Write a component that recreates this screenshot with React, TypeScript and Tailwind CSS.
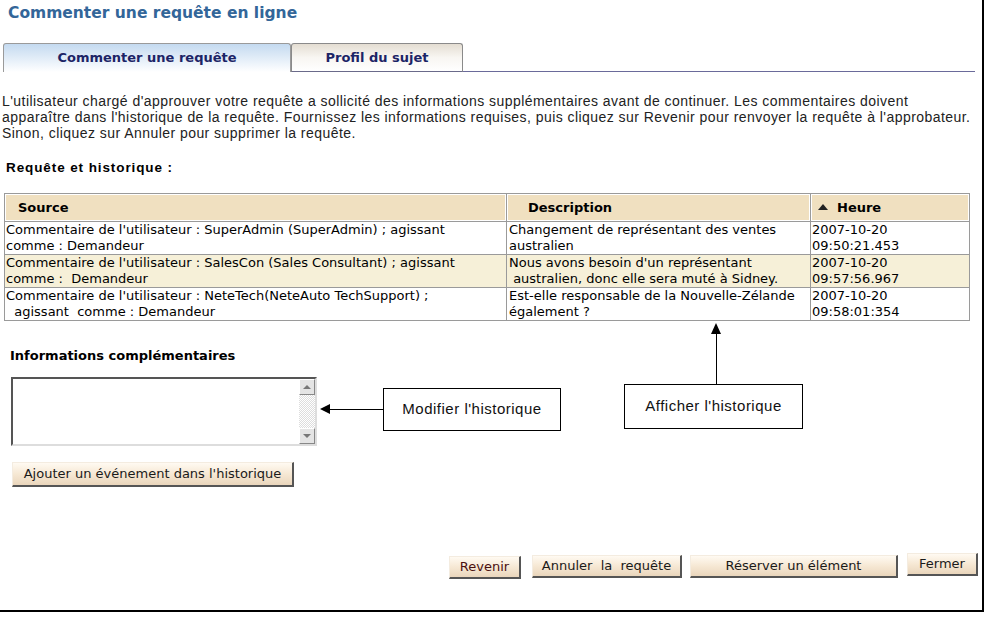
import React from 'react'

const verdana = { fontFamily: '"DejaVu Sans", Verdana, sans-serif' }
const tahoma = { fontFamily: '"Liberation Sans", Tahoma, Arial, sans-serif' }

const rows = [
  {
    source: ["Commentaire de l'utilisateur : SuperAdmin (SuperAdmin) ; agissant", 'comme : Demandeur'],
    desc: ['Changement de représentant des ventes', 'australien'],
    time: ['2007-10-20', '09:50:21.453'],
    alt: false,
  },
  {
    source: ["Commentaire de l'utilisateur : SalesCon (Sales Consultant) ; agissant", 'comme :  Demandeur'],
    desc: ["Nous avons besoin d'un représentant", ' australien, donc elle sera muté à Sidney.'],
    time: ['2007-10-20', '09:57:56.967'],
    alt: true,
  },
  {
    source: ["Commentaire de l'utilisateur : NeteTech(NeteAuto TechSupport) ;", '  agissant  comme : Demandeur'],
    desc: ['Est-elle responsable de la Nouvelle-Zélande', 'également ?'],
    time: ['2007-10-20', '09:58:01:354'],
    alt: false,
  },
]

function OldButton({ label, className, textClass }: { label: string; className?: string; textClass?: string }) {
  return (
    <button
      type="button"
      className={`h-[23px] border border-t-[#f4ece0] border-l-[#f4ece0] border-r-[#555] border-b-[#555] border-r-2 border-b-2 bg-gradient-to-b from-[#fffaf2] via-[#f6e8d4] to-[#ead6bc] text-[13px] leading-none whitespace-pre ${textClass ?? 'text-[#1a1a1a]'} ${className ?? ''}`}
      style={verdana}
    >
      {label}
    </button>
  )
}

export default function App() {
  return (
    <div className="relative w-[985px] h-[619px] bg-white overflow-hidden">
      <div className="w-[984px] h-[612px] border-r-2 border-b-2 border-black">
        <h1 className="pl-[8px] pt-[3px] text-[15.5px] font-bold text-[#336699] leading-[20px]" style={verdana}>
          Commenter une requête en ligne
        </h1>

        {/* tabs */}
        <div className="flex items-end mt-[20px] pl-[3px] pr-[7px]">
          <div
            className="w-[288px] h-[29px] rounded-t-[3px] border border-b-0 border-[#9a9a9a] bg-gradient-to-b from-[#c4daf0] to-[#ffffff] flex items-center justify-center text-[13px] font-bold text-[#1c2466]"
            style={verdana}
          >
            Commenter une requête
          </div>
          <div
            className="w-[172px] h-[29px] rounded-t-[3px] border border-b-[#6a6a8a] border-[#8a8a8a] bg-gradient-to-b from-[#e4ddd2] via-[#f8f6f2] to-[#ffffff] flex items-center justify-center text-[13px] font-bold text-[#1c2466]"
            style={verdana}
          >
            Profil du sujet
          </div>
          <div className="flex-1 border-b border-[#6a6a9a]" />
        </div>

        <p
          className="mt-[21px] pl-[2px] text-[14px] tracking-[0.45px] leading-[16px] text-[#222] whitespace-nowrap"
          style={tahoma}
        >
          L'utilisateur chargé d'approuver votre requête a sollicité des informations supplémentaires avant de continuer. Les commentaires doivent
          <br />
          apparaître dans l'historique de la requête. Fournissez les informations requises, puis cliquez sur Revenir pour renvoyer la requête à l'approbateur.
          <br />
          Sinon, cliquez sur Annuler pour supprimer la requête.
        </p>

        <div className="mt-[19px] pl-[6px] text-[13.5px] tracking-[0.9px] font-bold text-black leading-[16px]" style={tahoma}>
          Requête et historique :
        </div>

        <table
          className="mt-[17px] ml-[4px] w-[966px] border-collapse border border-[#9a9a9a] text-[13px] text-black"
          style={verdana}
        >
          <thead>
            <tr className="h-[28px]">
              <th className="w-[502px] border border-[#9a9a9a] bg-[#f0e0c0] text-left pl-[13px] font-bold text-[13px] shadow-[inset_0_0_0_1px_#fff]">
                Source
              </th>
              <th className="w-[304px] border border-[#9a9a9a] bg-[#f0e0c0] text-left pl-[21px] font-bold text-[13px] shadow-[inset_0_0_0_1px_#fff]">
                Description
              </th>
              <th className="border border-[#9a9a9a] bg-[#f0e0c0] text-left pl-[7px] font-bold text-[13px] shadow-[inset_0_0_0_1px_#fff]">
                <span className="inline-block align-middle mr-[9px] w-0 h-0 border-l-[5px] border-r-[5px] border-b-[6px] border-l-transparent border-r-transparent border-b-[#222] mb-[3px]" />
                Heure
              </th>
            </tr>
          </thead>
          <tbody>
            {rows.map((r, i) => (
              <tr key={i} className={`h-[33px] ${r.alt ? 'bg-[#f6f0d8]' : 'bg-white'}`}>
                <td className="border border-[#9a9a9a] align-top pl-[1px] leading-[16px] whitespace-pre">
                  {r.source[0]}
                  <br />
                  {r.source[1]}
                </td>
                <td className="border border-[#9a9a9a] align-top pl-[2px] leading-[16px] whitespace-pre">
                  {r.desc[0]}
                  <br />
                  {r.desc[1]}
                </td>
                <td className="border border-[#9a9a9a] align-top pl-[1px] leading-[16px]">
                  {r.time[0]}
                  <br />
                  {r.time[1]}
                </td>
              </tr>
            ))}
          </tbody>
        </table>

        <div className="mt-[27px] pl-[10px] text-[13px] font-bold text-black leading-[16px]" style={verdana}>
          Informations complémentaires
        </div>

        {/* textarea with classic scrollbar */}
        <div className="ml-[11px] mt-[13px] w-[306px] h-[69px] border-2 border-t-[#555] border-l-[#555] border-r-[#ddd] border-b-[#ddd] bg-white flex">
          <div className="flex-1" />
          <div className="w-[16px] flex flex-col bg-[repeating-conic-gradient(#ddd_0_25%,#fff_0_50%)] bg-[length:2px_2px]">
            <div className="h-[16px] bg-[#e4e4e4] border border-t-white border-l-white border-r-[#888] border-b-[#888] flex items-center justify-center">
              <span className="w-0 h-0 border-l-[4px] border-r-[4px] border-b-[4px] border-l-transparent border-r-transparent border-b-[#777]" />
            </div>
            <div className="flex-1" />
            <div className="h-[16px] bg-[#e4e4e4] border border-t-white border-l-white border-r-[#888] border-b-[#888] flex items-center justify-center">
              <span className="w-0 h-0 border-l-[4px] border-r-[4px] border-t-[4px] border-l-transparent border-r-transparent border-t-[#777]" />
            </div>
          </div>
        </div>

        <div className="mt-[14px] ml-[12px]">
          <OldButton label="Ajouter un événement dans l'historique" className="w-[282px] h-[25px]" />
        </div>

        <div className="mt-[67px] flex items-start pl-[449px] gap-[11px]">
          <OldButton label="Revenir" className="w-[72px] mt-[2px]" textClass="text-[#4a1010]" />
          <OldButton label="Annuler  la  requête" className="w-[150px] mt-[1px]" />
          <OldButton label="Réserver un élément" className="w-[208px] ml-[-3px] mt-[1px]" />
          <OldButton label="Fermer" className="w-[71px] ml-[-2px] mt-[-1px]" />
        </div>
      </div>

      {/* annotation callouts */}
      <div className="absolute left-[320px] top-[404px] flex items-center">
        <span className="w-0 h-0 border-t-[5px] border-b-[5px] border-r-[10px] border-t-transparent border-b-transparent border-r-black" />
        <span className="w-[53px] h-[1px] bg-black" />
      </div>
      <div
        className="absolute left-[383px] top-[388px] w-[178px] h-[43px] border border-black bg-white flex items-center justify-center text-[15px] tracking-[0.5px] text-[#111]"
        style={tahoma}
      >
        Modifier l'historique
      </div>

      <div className="absolute left-[711px] top-[323px] flex flex-col items-center">
        <span className="w-0 h-0 border-l-[5px] border-r-[5px] border-b-[11px] border-l-transparent border-r-transparent border-b-black" />
        <span className="w-[1px] h-[50px] bg-black" />
      </div>
      <div
        className="absolute left-[624px] top-[384px] w-[179px] h-[45px] border border-black bg-white flex items-center justify-center text-[15px] tracking-[0.5px] text-[#111]"
        style={tahoma}
      >
        Afficher l'historique
      </div>
    </div>
  )
}
